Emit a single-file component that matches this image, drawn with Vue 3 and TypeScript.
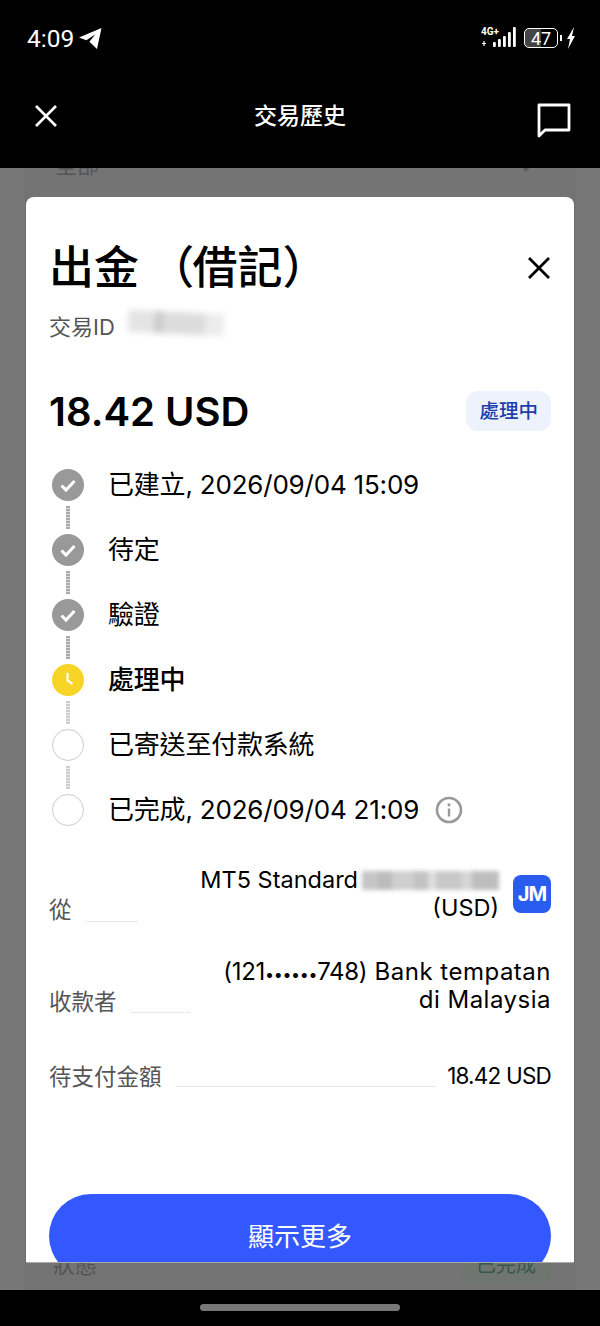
<template>
  <div class="screen">
    <div class="status-bar">
      <div class="status-left">
        <span class="clock">4:09</span>
        <svg class="plane" viewBox="0 0 24 24" width="24" height="24">
          <path d="M23.5 2 1 11.4l7.4 2.8 9-6-6 7.6 7.6 7.2z" fill="#fff" />
        </svg>
      </div>
      <div class="status-right">
        <svg width="36" height="24" viewBox="0 0 36 24">
          <text x="0" y="9" class="net">4G+</text>
          <path d="M3 15v5M1 17.5h4" stroke="#fff" stroke-width="1.2" />
          <rect x="12" y="16" width="2.8" height="5" rx="1" fill="#fff" />
          <rect x="17" y="13" width="2.8" height="8" rx="1" fill="#fff" />
          <rect x="22" y="10" width="2.8" height="11" rx="1" fill="#fff" />
          <rect x="27" y="6" width="2.8" height="15" rx="1" fill="#fff" />
          <rect x="32" y="1" width="2.8" height="20" rx="1" fill="#fff" />
        </svg>
        <div class="battery"><span class="battery-num">47</span></div>
        <span class="battery-cap"></span>
        <svg width="10" height="22" viewBox="0 0 10 22">
          <path d="M8 0 1 12h3l-2 10 7-13H6z" fill="#fff" />
        </svg>
      </div>
    </div>

    <header class="app-bar">
      <svg class="bar-close" width="24" height="24" viewBox="0 0 24 24">
        <path d="M2 2l20 20M22 2 2 22" stroke="#fff" stroke-width="2.6" />
      </svg>
      <h1 class="bar-title">交易歷史</h1>
      <svg class="bar-chat" width="36" height="36" viewBox="0 0 36 36">
        <path d="M3 3h30v25H9l-6 6z" fill="none" stroke="#fff" stroke-width="2.8" stroke-linejoin="round" />
      </svg>
    </header>

    <main class="backdrop">
      <div class="behind-card">
        <div class="behind-top">
          <span>全部</span>
          <span class="chevron"></span>
        </div>
        <div class="behind-bottom">
          <span>狀態</span>
          <span class="behind-pill">已完成</span>
        </div>
      </div>

      <section class="modal">
        <div class="title-row">
          <h2 class="title">出金<span class="paren">（</span>借記）</h2>
          <svg width="24" height="24" viewBox="0 0 24 24">
            <path d="M2 2l20 20M22 2 2 22" stroke="#000" stroke-width="2.8" />
          </svg>
        </div>

        <div class="id-row">
          <span>交易ID</span>
          <span class="redact redact-id"></span>
        </div>

        <div class="amount-row">
          <span class="amount">18.42 USD</span>
          <span class="badge">處理中</span>
        </div>

        <ol class="steps">
          <li v-for="(step, i) in steps" :key="step.label" class="step">
            <div class="step-main">
              <span class="dot" :class="step.state">
                <svg v-if="step.state === 'done'" width="32" height="32" viewBox="0 0 32 32">
                  <path d="M9.5 16.5l4.5 4.5 8.5-9" fill="none" stroke="#fff" stroke-width="3" />
                </svg>
                <svg v-else-if="step.state === 'active'" width="32" height="32" viewBox="0 0 32 32">
                  <path d="M15.5 9v7.5l5 3.5" fill="none" stroke="#fff" stroke-width="2.2" />
                </svg>
              </span>
              <span class="step-label" :class="{ strong: step.state === 'active' }">{{ step.label }}</span>
              <svg v-if="step.info" class="info" width="28" height="28" viewBox="0 0 28 28">
                <circle cx="14" cy="14" r="12" fill="none" stroke="#999" stroke-width="2.6" />
                <circle cx="14" cy="8.8" r="1.6" fill="#999" />
                <path d="M14 12.5v8" stroke="#999" stroke-width="2.4" />
              </svg>
            </div>
            <div v-if="i < steps.length - 1" class="link" :class="{ pale: i >= 3 }"></div>
          </li>
        </ol>

        <div class="detail detail-from">
          <span class="detail-label">從</span>
          <span class="dots"></span>
          <div class="detail-value from-value">
            <div class="from-text">
              <div class="from-line">MT5 Standard<span class="redact redact-acc"></span></div>
              <div>(USD)</div>
            </div>
            <span class="jm">JM</span>
          </div>
        </div>

        <div class="detail detail-to">
          <span class="detail-label">收款者</span>
          <span class="dots"></span>
          <div class="detail-value"><span class="acct">(121<span class="bullets">••••••</span>748)</span> Bank tempatan<br />di Malaysia</div>
        </div>

        <div class="detail detail-pay">
          <span class="detail-label">待支付金額</span>
          <span class="dots"></span>
          <div class="detail-value">18.42 USD</div>
        </div>

        <button class="more" type="button">顯示更多</button>
      </section>
    </main>

    <footer class="nav-bar"><span class="home-pill"></span></footer>
  </div>
</template>

<script setup lang="ts">
interface Step {
  label: string
  state: 'done' | 'active' | 'todo'
  info?: boolean
}

const steps: Step[] = [
  { label: '已建立, 2026/09/04 15:09', state: 'done' },
  { label: '待定', state: 'done' },
  { label: '驗證', state: 'done' },
  { label: '處理中', state: 'active' },
  { label: '已寄送至付款系統', state: 'todo' },
  { label: '已完成, 2026/09/04 21:09', state: 'todo', info: true }
]
</script>

<style>
html,
body {
  margin: 0;
  background: #000;
}
</style>

<style scoped>
.screen {
  width: 600px;
  height: 1326px;
  display: flex;
  flex-direction: column;
  overflow: hidden;
  font-family: Inter, "Noto Sans CJK TC", sans-serif;
  color: #000;
}

.status-bar {
  height: 76px;
  background: #000;
  display: flex;
  justify-content: space-between;
  align-items: center;
  padding: 0 24px 0 27px;
  box-sizing: border-box;
  color: #fff;
}

.status-left {
  display: flex;
  align-items: center;
  gap: 4px;
}

.clock {
  font: 400 24.5px Roboto, sans-serif;
}

.status-right {
  display: flex;
  align-items: center;
}

.net {
  font: 700 10px Roboto, sans-serif;
  fill: #fff;
}

.battery {
  width: 32px;
  height: 18px;
  margin-left: 7px;
  border: 1.5px solid #fff;
  border-radius: 5px;
  display: flex;
  align-items: center;
  justify-content: center;
  background: linear-gradient(90deg, #444 50%, #000 50%);
}

.battery-num {
  font: 400 18px Roboto, sans-serif;
}

.battery-cap {
  width: 2px;
  height: 6px;
  margin: 0 4px 0 2px;
  background: #fff;
}

.app-bar {
  height: 92px;
  background: #000;
  display: flex;
  align-items: center;
  justify-content: space-between;
  padding: 0 28px 12px 34px;
  box-sizing: border-box;
}

.bar-title {
  margin: 0 0 0 6px;
  color: #fff;
  font-size: 23px;
  font-weight: 500;
  line-height: 32px;
}

.bar-chat {
  margin-top: 8px;
}

.backdrop {
  flex: 1;
  position: relative;
  background: #777;
  overflow: hidden;
}

.behind-card {
  height: 100%;
  margin: 0 25px;
  background: #747474;
  border: solid #6d6d6d;
  border-width: 0 1px;
  display: flex;
  flex-direction: column;
  justify-content: space-between;
  color: #555;
  font-size: 22px;
}

.behind-top {
  display: flex;
  justify-content: space-between;
  align-items: center;
  margin-top: -19px;
  padding: 0 43px 0 29px;
  line-height: 32px;
}

.chevron {
  width: 0;
  height: 0;
  margin-top: 12px;
  border: 5px solid transparent;
  border-top: 6px solid #5a5a5a;
}

.behind-bottom {
  display: flex;
  justify-content: space-between;
  align-items: center;
  padding: 0 23px 5px 27px;
  line-height: 40px;
}

.behind-pill {
  padding: 0 15px;
  background: #6f756f;
  border-radius: 12px;
  color: #37574a;
  font-size: 20px;
}

.modal {
  position: absolute;
  top: 29px;
  left: 26px;
  right: 26px;
  height: 1065px;
  background: #fff;
  border-radius: 8px 8px 0 0;
  box-shadow: 0 1px 0 #a9a9a9;
  padding: 41px 23px 0;
  box-sizing: border-box;
  overflow: hidden;
  display: flex;
  flex-direction: column;
}

.title-row {
  display: flex;
  justify-content: space-between;
  align-items: center;
}

.title {
  margin: 0;
  font-size: 45px;
  font-weight: 500;
  line-height: 60px;
}

.paren {
  font-feature-settings: "palt";
  margin-left: 31px;
}

.id-row {
  display: flex;
  align-items: center;
  gap: 13px;
  height: 30px;
  margin-top: 12px;
  color: #555;
  font-size: 22px;
}

.redact {
  display: inline-block;
}

.redact-id {
  width: 96px;
  height: 22px;
  margin-top: -4px;
  background: linear-gradient(90deg, #e4e4e4 0 28%, #c9c9c9 28% 36%, #dcdcdc 36% 80%, #ececec 80%);
  transform: rotate(3deg);
  filter: blur(3px);
}

.amount-row {
  display: flex;
  justify-content: space-between;
  align-items: center;
  height: 40px;
  margin-top: 51px;
}

.amount {
  font-size: 40px;
  font-weight: 600;
}

.badge {
  height: 40px;
  padding: 0 13px;
  background: #eef2fd;
  border-radius: 12px;
  color: #1d3faa;
  font-size: 19.5px;
  font-weight: 500;
  line-height: 40px;
}

.steps {
  list-style: none;
  margin: 38px 0 0;
  padding: 0 0 0 3px;
}

.step-main {
  display: flex;
  align-items: center;
  height: 32px;
}

.dot {
  width: 32px;
  height: 32px;
  flex: none;
  border-radius: 50%;
  box-sizing: border-box;
}

.dot.done {
  background: #999;
}

.dot.active {
  background: #f7d426;
}

.dot.todo {
  border: 1.5px solid #ccc;
}

.step-label {
  margin-left: 24px;
  font-size: 26px;
  line-height: 36px;
  letter-spacing: -0.2px;
}

.step-label.strong {
  font-weight: 500;
}

.info {
  margin-left: 16px;
}

.link {
  width: 4px;
  height: 23px;
  margin: 5px 0 5px 14px;
  background: repeating-linear-gradient(#aaa 0 2px, #ddd 2px 3px);
}

.link.pale {
  background: repeating-linear-gradient(#ccc 0 2px, #eee 2px 3px);
}

.detail {
  display: flex;
  align-items: flex-end;
  line-height: 28px;
}

.detail-from {
  margin-top: 40px;
  font-size: 23.5px;
}

.detail-to {
  margin-top: 36px;
  font-size: 24px;
  letter-spacing: 0.5px;
}

.detail-pay {
  margin-top: 48px;
  font-size: 22.5px;
  letter-spacing: -0.8px;
}

.detail-label {
  flex: none;
  color: #555;
  font-size: 22.5px;
  letter-spacing: 0;
  line-height: 30px;
  margin-bottom: -3px;
}

.detail-pay .detail-label {
  margin-bottom: -2px;
}

.dots {
  flex: 1;
  margin: 0 12px 0 14px;
  border-bottom: 1px dotted #d4d4d4;
}

.detail-pay .dots {
  margin-bottom: 3px;
}

.detail-to .dots {
  margin-bottom: 1px;
}

.detail-value {
  flex: none;
  text-align: right;
}

.detail-from .detail-value {
  width: 402px;
}

.detail-to .detail-value {
  width: 349px;
}

.acct {
  letter-spacing: -0.3px;
}

.bullets {
  font-size: 16px;
  line-height: 1;
}

.from-value {
  display: flex;
  justify-content: flex-end;
  align-items: center;
  gap: 14px;
}

.from-line {
  display: flex;
  align-items: center;
}

.redact-acc {
  width: 137px;
  height: 19px;
  margin-left: 4px;
  background: linear-gradient(90deg, #c6c6c6 0 12%, #bcbcbc 12% 22%, #cfcfcf 22% 38%, #c2c2c2 38% 48%, #dedede 48% 54%, #c8c8c8 54% 72%, #d6d6d6 72% 80%, #bebebe 80%);
  filter: blur(2px);
}

.jm {
  width: 38px;
  height: 38px;
  flex: none;
  background: #2a5cf0;
  border-radius: 8px;
  color: #fff;
  font-size: 20px;
  font-weight: 700;
  line-height: 38px;
  text-align: center;
  letter-spacing: -0.8px;
}

.more {
  flex: none;
  height: 84px;
  margin-top: auto;
  margin-bottom: -16px;
  padding: 0 0 4px;
  border: 0;
  border-radius: 42px;
  background: #3358ff;
  color: #fff;
  font: 400 26px Inter, "Noto Sans CJK TC", sans-serif;
}

.nav-bar {
  height: 36px;
  background: #000;
  display: flex;
  justify-content: center;
  padding-top: 14px;
  box-sizing: border-box;
}

.home-pill {
  width: 200px;
  height: 7px;
  border-radius: 4px;
  background: #777;
}
</style>
